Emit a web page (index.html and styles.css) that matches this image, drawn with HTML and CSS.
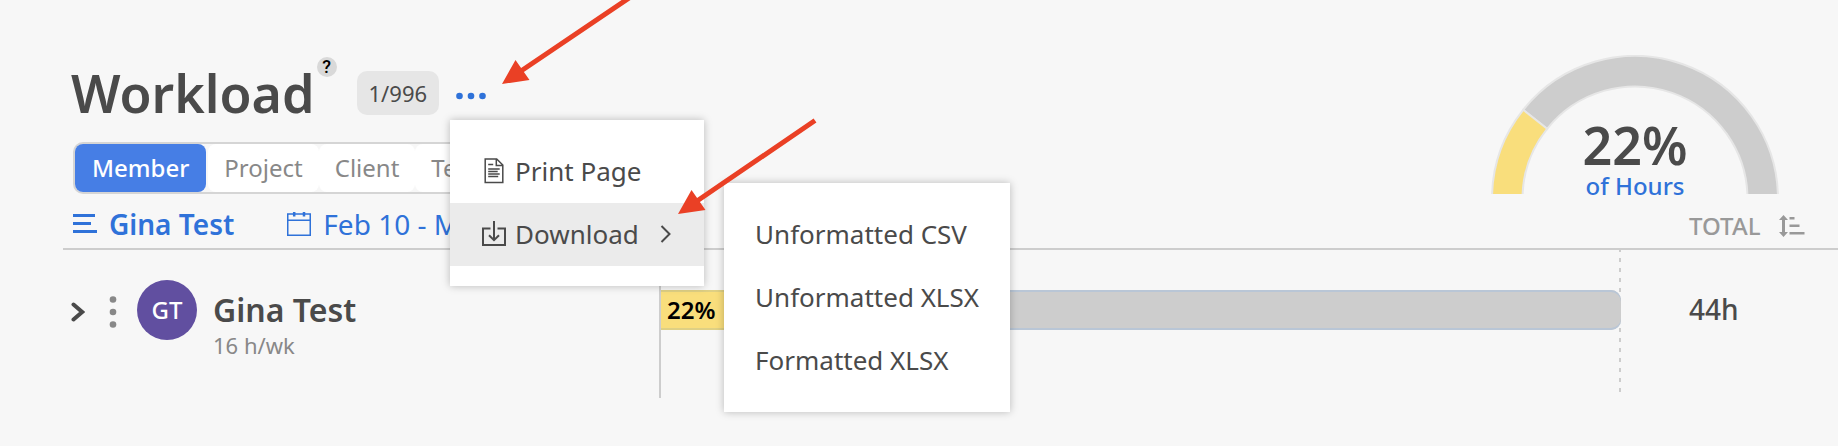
FILE: index.html
```html
<!DOCTYPE html>
<html lang="en">
<head>
<meta charset="utf-8">
<title>Workload</title>
<meta name="viewport" content="width=device-width, initial-scale=1">
<link rel="stylesheet" href="styles.css">
</head>
<body>
<main class="page">
  <header class="header">
    <div class="header-main">
      <div class="title-row">
        <h1 class="title">Workload</h1>
        <button class="help" type="button" aria-label="Help">?</button>
        <span class="count">1/996</span>
        <div class="more">
          <button class="more-button" type="button" aria-label="More options" aria-expanded="true">
            <svg width="30" height="8" viewBox="0 0 30 8" fill="currentColor" aria-hidden="true"><circle cx="3.5" cy="4" r="3.3"/><circle cx="15" cy="4" r="3.3"/><circle cx="26.5" cy="4" r="3.3"/></svg>
          </button>
          <div class="menu" role="menu">
            <button class="menu-item" type="button" role="menuitem">
              <svg class="icon" viewBox="0 0 24 26" fill="none" stroke="currentColor" stroke-width="1.5" aria-hidden="true"><path d="M3.2 1h11.5L20.8 7v17.5H3.2zM14.3 1v6.5h6.5"/><path d="M6.2 6.5h5M6.2 11h11.5M6.2 13.500h9.500M6.2 16h11.500M6.2 18.600h10"/></svg>
              <span>Print Page</span>
            </button>
            <div class="submenu-host">
              <button class="menu-item is-active" type="button" role="menuitem" aria-expanded="true">
                <svg class="icon" viewBox="0 0 24 26" fill="none" stroke="currentColor" stroke-width="2" aria-hidden="true"><path d="M8.500 7.500H1V24h22V7.500h-7.500"/><path d="M12 0v19M7 14.200l5 5 5-5"/></svg>
                <span>Download</span>
                <svg class="chevron" width="12" height="18" viewBox="0 0 12 18" fill="none" stroke="currentColor" stroke-width="2" aria-hidden="true"><path d="M1.500 1L9.500 9l-8 8"/></svg>
              </button>
              <div class="menu submenu" role="menu">
                <button class="menu-item" type="button" role="menuitem">Unformatted CSV</button>
                <button class="menu-item" type="button" role="menuitem">Unformatted XLSX</button>
                <button class="menu-item" type="button" role="menuitem">Formatted XLSX</button>
              </div>
            </div>
          </div>
        </div>
      </div>
      <div class="tabs" role="tablist">
        <button class="tab is-selected" type="button" role="tab" aria-selected="true">Member</button>
        <button class="tab" type="button" role="tab">Project</button>
        <button class="tab" type="button" role="tab">Client</button>
        <button class="tab" type="button" role="tab">Team</button>
      </div>
      <div class="filters">
        <button class="filter filter-member" type="button">
          <svg width="24" height="20" viewBox="0 0 24 20" fill="currentColor" aria-hidden="true"><path d="M0 0h22v3H0zM0 8h18v3H0zM0 16h24v3H0z"/></svg>
          <span>Gina Test</span>
        </button>
        <button class="filter" type="button">
          <svg width="24" height="24" viewBox="0 0 24 24" fill="none" stroke="currentColor" aria-hidden="true"><path stroke-width="1.500" d="M.75 2h22.500v21.200H.75zM.75 8.300h22.500"/><path stroke-width="2.500" d="M7.200 0v4.500M17 0v4.500"/></svg>
          <span>Feb 10 - Mar 9</span>
        </button>
      </div>
    </div>
    <div class="header-side">
      <div class="gauge">
        <svg class="gauge-arc" width="290" height="139" viewBox="0 0 290 139" stroke="#e6e6e6" stroke-width="2" aria-hidden="true">
          <path fill="#cdcdcd" d="M33.200 54.800A143 143 0 0 1 288 144H257.500A112.500 112.500 0 0 0 57.100 73.800z"/>
          <path fill="#f9de7c" d="M2 144A143 143 0 0 1 33.200 54.800L57.100 73.800A112.500 112.500 0 0 0 32.500 144z"/>
        </svg>
        <div class="gauge-text">
          <strong class="gauge-value">22%</strong>
          <a class="gauge-link" href="#hours">of Hours</a>
        </div>
      </div>
      <button class="sort" type="button">
        <span>TOTAL</span>
        <svg width="26" height="22" viewBox="0 0 26 22" fill="currentColor" aria-hidden="true"><path d="M4.500 0L9 5H6v12h3l-4.500 5L0 17h3V5H0zM10.500 2h5v2.500h-5zM10.500 9.500h10V12h-10zM10.500 17h15v2.500h-15z"/></svg>
      </button>
    </div>
  </header>

  <section class="row">
    <div class="member">
      <button class="plain expand" type="button" aria-label="Expand">
        <svg width="14" height="20" viewBox="0 0 14 20" fill="none" stroke="currentColor" stroke-width="4" stroke-linecap="round" aria-hidden="true"><path d="M2.500 2.500L11.200 10l-8.700 7.500"/></svg>
      </button>
      <button class="plain kebab" type="button" aria-label="Member options">
        <svg width="8" height="32" viewBox="0 0 8 32" fill="currentColor" aria-hidden="true"><circle cx="4" cy="3.500" r="3.300"/><circle cx="4" cy="16" r="3.300"/><circle cx="4" cy="28.500" r="3.300"/></svg>
      </button>
      <span class="avatar">GT</span>
      <div class="identity">
        <h2 class="name">Gina Test</h2>
        <p class="rate">16 h/wk</p>
      </div>
    </div>
    <div class="track">
      <div class="bar">
        <div class="bar-fill" style="width: 22%">22%</div>
      </div>
    </div>
    <div class="total">44h</div>
  </section>

  <svg class="arrows" width="838" height="230" viewBox="0 0 838 230" fill="#ea4025" aria-hidden="true">
    <path stroke="#ea4025" stroke-width="5" d="M521 71L632-4M697 201L815 120.500"/>
    <path d="M502 84l13.500-24L529.500 80zM678 214l13.500-24L705.500 210z"/>
  </svg>
</main>
</body>
</html>
```
FILE: styles.css
```css
* {
  box-sizing: border-box;
}

body {
  margin: 0;
  background: #f7f7f7;
  color: #4a4a4a;
  font-family: "Noto Sans", "Open Sans", sans-serif;
  font-size: 24px;
  line-height: 32px;
}

button {
  margin: 0;
  padding: 0;
  border: 0;
  background: none;
  color: inherit;
  font: inherit;
  white-space: nowrap;
  cursor: pointer;
}

svg {
  display: block;
  flex: none;
}

h1,
h2,
p {
  margin: 0;
}

.page {
  position: relative;
  padding: 0 0 48px 63px;
}

.header {
  display: flex;
  justify-content: space-between;
  align-items: flex-end;
  padding-top: 55px;
  border-bottom: 2px solid #cdcdcd;
}

.header-main {
  padding: 0 0 6px 8px;
}

.title-row {
  display: flex;
  align-items: center;
}

.title {
  font-size: 52px;
  font-weight: 600;
  line-height: 76px;
}

.help {
  align-self: flex-start;
  width: 20px;
  height: 20px;
  margin: 2px 20px 0 2px;
  border-radius: 50%;
  background: #d9d9d9;
  color: #000;
  font: 500 18px/20px Roboto, sans-serif;
}

.count {
  padding: 6px 12px;
  border-radius: 10px;
  background: #e6e6e6;
  font-size: 22px;
}

.more {
  position: relative;
  margin-left: 17px;
}

.more-button {
  display: block;
  padding: 11px 0 5px;
  color: #2f72d9;
}

.menu {
  position: absolute;
  z-index: 2;
  top: 39px;
  left: -6px;
  width: 254px;
  padding: 20px 0;
  background: #fff;
  box-shadow: 0 0 8px rgba(0, 0, 0, 0.25);
  font-size: 26px;
}

.menu-item {
  display: flex;
  align-items: center;
  gap: 9px;
  width: 100%;
  height: 63px;
  padding: 0 32px 2px;
}

.menu-item.is-active {
  background: #ebebeb;
}

.icon {
  width: 24px;
  height: 26px;
}

.chevron {
  margin-left: 12px;
}

.submenu-host {
  position: relative;
}

.submenu {
  top: -20px;
  left: 274px;
  width: auto;
}

.submenu .menu-item {
  padding: 0 31px 2px;
}

.tabs {
  display: inline-flex;
  margin: 11px 0 12px 2px;
  border: 2px solid #d5d5d5;
  border-radius: 10px;
}

.tab {
  height: 48px;
  padding: 0 16px;
  border-radius: 8px;
  background: #fff;
  color: #888;
}

.tab.is-selected {
  margin-right: 2px;
  padding: 0 17px;
  background: #467ee5;
  color: #fff;
  font-weight: 500;
}

.filters {
  display: flex;
  gap: 53px;
  padding-left: 2px;
  color: #2f72d9;
  font-size: 28px;
  line-height: 36px;
}

.filter {
  display: flex;
  align-items: center;
  gap: 12px;
}

.filter-member {
  font-weight: 600;
}

.header-side {
  width: 348px;
  padding-bottom: 6px;
}

.gauge {
  display: grid;
  width: 290px;
}

.gauge-arc,
.gauge-text {
  grid-area: 1 / 1;
}

.gauge-text {
  display: flex;
  flex-direction: column;
  align-items: center;
  padding-top: 65px;
  font-weight: 500;
}

.gauge-value {
  font-size: 52px;
  font-weight: 600;
  line-height: 50px;
}

.gauge-link {
  color: #2f72d9;
  text-decoration: none;
}

.sort {
  display: flex;
  align-items: center;
  gap: 19px;
  margin: 8px 0 0 199px;
  color: #999;
  font-weight: 500;
}

.row {
  display: grid;
  grid-template-columns: 596px 1fr 217px;
}

.member {
  display: flex;
  align-items: flex-start;
  padding: 30px 0 0 8px;
}

.plain {
  display: flex;
  align-items: center;
  height: 60px;
}

.expand {
  padding-top: 4px;
}

.kebab {
  margin: 0 20px 0 24px;
  padding-top: 4px;
  color: #888;
}

.avatar {
  width: 60px;
  height: 60px;
  border-radius: 50%;
  background: #614fa0;
  color: #fff;
  font-size: 24px;
  font-weight: 500;
  line-height: 60px;
  text-align: center;
}

.identity {
  padding: 10px 0 0 16px;
}

.name {
  font-size: 32px;
  font-weight: 600;
  line-height: 40px;
}

.rate {
  color: #888;
  font-size: 22px;
  line-height: 30px;
}

.track {
  height: 148px;
  padding-top: 40px;
  border-left: 2px solid #cdcdcd;
  background: repeating-linear-gradient(#cdcdcd 0 2px, transparent 2px 8px, #cdcdcd 8px 10px) right top / 2px 142px no-repeat;
}

.bar {
  height: 40px;
  overflow: hidden;
  border-radius: 0 10px 10px 0;
  background: #cdcdcd;
  box-shadow: inset 0 2px #b9c6d6, inset 0 -2px #b9c6d6;
}

.bar-fill {
  height: 40px;
  padding-left: 6px;
  border: solid #dfd084;
  border-width: 2px 0;
  background: #f9de7c;
  color: #000;
  font-size: 24px;
  font-weight: 600;
  line-height: 36px;
}

.total {
  padding: 40px 0 0 68px;
  font-size: 28px;
  font-weight: 500;
  line-height: 38px;
}

.arrows {
  position: absolute;
  z-index: 3;
  top: 0;
  left: 0;
  pointer-events: none;
}
```
